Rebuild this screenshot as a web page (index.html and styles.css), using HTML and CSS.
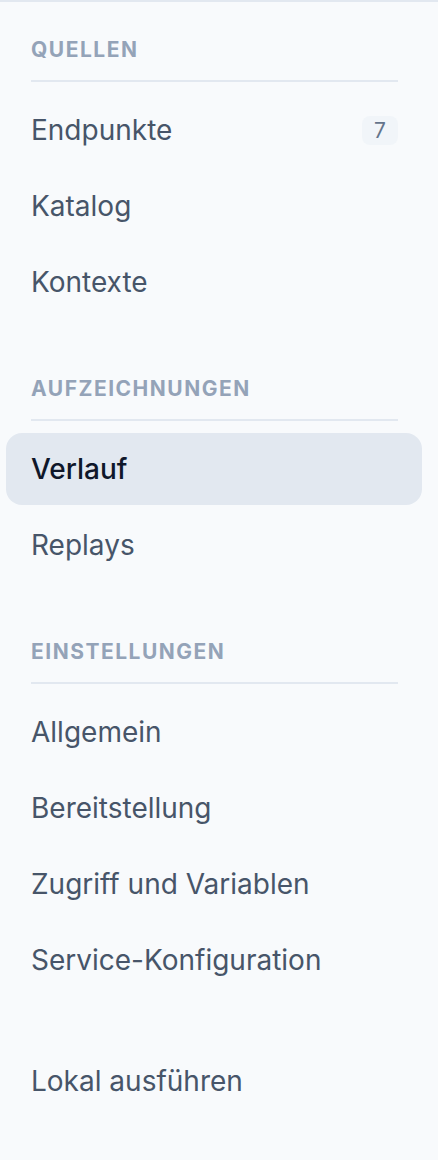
FILE: index.html
```html
<!DOCTYPE html>
<html>
<head>
    <meta charset="utf-8">
    <title>Navigation</title>
    <link rel="stylesheet" href="styles.css">
</head>
<body>
    <nav class="sidebar">
        <div class="section">
            <div class="section-title">Quellen</div>
            <ul class="items">
                <li class="item"><span>Endpunkte</span><span class="badge">7</span></li>
                <li class="item">Katalog</li>
                <li class="item">Kontexte</li>
            </ul>
        </div>
        <div class="section">
            <div class="section-title">Aufzeichnungen</div>
            <ul class="items">
                <li class="item active">Verlauf</li>
                <li class="item">Replays</li>
            </ul>
        </div>
        <div class="section">
            <div class="section-title">Einstellungen</div>
            <ul class="items">
                <li class="item">Allgemein</li>
                <li class="item">Bereitstellung</li>
                <li class="item">Zugriff und Variablen</li>
                <li class="item">Service-Konfiguration</li>
            </ul>
        </div>
        <ul class="items footer">
            <li class="item">Lokal ausführen</li>
        </ul>
    </nav>
</body>
</html>
```

FILE: styles.css
```css
*{
	margin: 0;
	padding: 0;
	box-sizing: border-box;
}
body{
	background-color: #f8fafc;
	font-family: Inter, "Noto Sans", sans-serif;
	height: 1160px;
	border-top: 2px solid #e2e8f0;
}
.sidebar{
	padding: 34px 16px 0 6px;
}
.section + .section{
	margin-top: 57px;
}
.section-title{
	margin: 0 24px 0 25px;
	padding-bottom: 16px;
	border-bottom: 2px solid #e2e8f0;
	font-size: 21px;
	line-height: 28px;
	font-weight: 700;
	letter-spacing: 1.5px;
	text-transform: uppercase;
	color: #94a3b8;
}
.items{
	list-style: none;
	display: flex;
	flex-direction: column;
	gap: 4px;
	margin-top: 12px;
}
.item{
	height: 72px;
	padding: 0 24px 0 25px;
	display: flex;
	align-items: center;
	justify-content: space-between;
	border-radius: 16px;
	font-size: 28px;
	color: #475569;
}
.item.active{
	background-color: #e2e8f0;
	color: #0f172a;
	font-weight: 500;
}
.badge{
	width: 36px;
	height: 29px;
	border-radius: 8px;
	background-color: #f1f5f9;
	color: #64748b;
	font-size: 21px;
	display: flex;
	align-items: center;
	justify-content: center;
}
.footer{
	margin-top: 49px;
}
```
